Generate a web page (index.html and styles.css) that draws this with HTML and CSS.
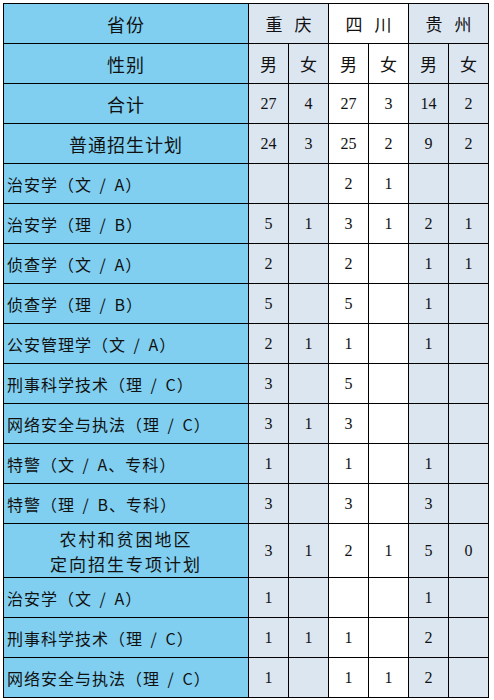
FILE: index.html
```html
<!DOCTYPE html>
<html lang="zh-CN">
<head>
<meta charset="utf-8">
<title>招生计划</title>
<link rel="stylesheet" href="styles.css">
</head>
<body>
<table class="plan">
  <colgroup>
    <col class="c-label">
    <col class="c-num"><col class="c-num"><col class="c-num"><col class="c-num"><col class="c-num"><col class="c-num">
  </colgroup>
  <tbody>
    <tr>
      <th class="lab head">省份</th>
      <th class="prov lt" colspan="2">重 庆</th>
      <th class="prov wh" colspan="2">四 川</th>
      <th class="prov lt" colspan="2">贵 州</th>
    </tr>
    <tr>
      <th class="lab head">性别</th>
      <th class="sex lt">男</th><th class="sex lt">女</th>
      <th class="sex wh">男</th><th class="sex wh">女</th>
      <th class="sex lt">男</th><th class="sex lt">女</th>
    </tr>
    <tr>
      <th class="lab head">合计</th>
      <td class="lt">27</td><td class="lt">4</td><td class="wh">27</td><td class="wh">3</td><td class="lt">14</td><td class="lt">2</td>
    </tr>
    <tr>
      <th class="lab head">普通招生计划</th>
      <td class="lt">24</td><td class="lt">3</td><td class="wh">25</td><td class="wh">2</td><td class="lt">9</td><td class="lt">2</td>
    </tr>
    <tr>
      <th class="lab">治安学（文 / A）</th>
      <td class="lt"></td><td class="lt"></td><td class="wh">2</td><td class="wh">1</td><td class="lt"></td><td class="lt"></td>
    </tr>
    <tr>
      <th class="lab">治安学（理 / B）</th>
      <td class="lt">5</td><td class="lt">1</td><td class="wh">3</td><td class="wh">1</td><td class="lt">2</td><td class="lt">1</td>
    </tr>
    <tr>
      <th class="lab">侦查学（文 / A）</th>
      <td class="lt">2</td><td class="lt"></td><td class="wh">2</td><td class="wh"></td><td class="lt">1</td><td class="lt">1</td>
    </tr>
    <tr>
      <th class="lab">侦查学（理 / B）</th>
      <td class="lt">5</td><td class="lt"></td><td class="wh">5</td><td class="wh"></td><td class="lt">1</td><td class="lt"></td>
    </tr>
    <tr>
      <th class="lab">公安管理学（文 / A）</th>
      <td class="lt">2</td><td class="lt">1</td><td class="wh">1</td><td class="wh"></td><td class="lt">1</td><td class="lt"></td>
    </tr>
    <tr>
      <th class="lab">刑事科学技术（理 / C）</th>
      <td class="lt">3</td><td class="lt"></td><td class="wh">5</td><td class="wh"></td><td class="lt"></td><td class="lt"></td>
    </tr>
    <tr>
      <th class="lab">网络安全与执法（理 / C）</th>
      <td class="lt">3</td><td class="lt">1</td><td class="wh">3</td><td class="wh"></td><td class="lt"></td><td class="lt"></td>
    </tr>
    <tr>
      <th class="lab">特警（文 / A、专科）</th>
      <td class="lt">1</td><td class="lt"></td><td class="wh">1</td><td class="wh"></td><td class="lt">1</td><td class="lt"></td>
    </tr>
    <tr>
      <th class="lab">特警（理 / B、专科）</th>
      <td class="lt">3</td><td class="lt"></td><td class="wh">3</td><td class="wh"></td><td class="lt">3</td><td class="lt"></td>
    </tr>
    <tr class="tall">
      <th class="lab head two">农村和贫困地区<br>定向招生专项计划</th>
      <td class="lt">3</td><td class="lt">1</td><td class="wh">2</td><td class="wh">1</td><td class="lt">5</td><td class="lt">0</td>
    </tr>
    <tr>
      <th class="lab">治安学（文 / A）</th>
      <td class="lt">1</td><td class="lt"></td><td class="wh"></td><td class="wh"></td><td class="lt">1</td><td class="lt"></td>
    </tr>
    <tr>
      <th class="lab">刑事科学技术（理 / C）</th>
      <td class="lt">1</td><td class="lt">1</td><td class="wh">1</td><td class="wh"></td><td class="lt">2</td><td class="lt"></td>
    </tr>
    <tr>
      <th class="lab">网络安全与执法（理 / C）</th>
      <td class="lt">1</td><td class="lt"></td><td class="wh">1</td><td class="wh">1</td><td class="lt">2</td><td class="lt"></td>
    </tr>
  </tbody>
</table>
</body>
</html>
```
FILE: styles.css
```css
html, body {
  margin: 0;
  padding: 0;
  background: #ffffff;
}

body {
  padding: 3px 0 0 3px;
}

.plan {
  table-layout: fixed;
  width: 486px;
  border-collapse: separate;
  border-spacing: 1px;
  background: #000000;
}

.c-label { width: 244px; }
.c-num { width: 39px; }

.plan tr { height: 39px; }
.plan tr.tall { height: 53px; }

.plan th,
.plan td {
  padding: 0;
  height: 39px;
  text-align: center;
  vertical-align: middle;
  color: #111111;
  font-weight: normal;
}

.plan tr.tall th,
.plan tr.tall td { height: 53px; }

.lab {
  background: #80cff0;
  font-family: "Noto Sans CJK SC", "Noto Sans", sans-serif;
  font-weight: 500;
  font-size: 16px;
  letter-spacing: 1px;
  word-spacing: 3px;
  text-align: left !important;
  padding-left: 3px !important;
  white-space: nowrap;
}

.lab.head {
  text-align: center !important;
  padding-left: 0 !important;
  font-size: 18px;
  letter-spacing: 1px;
  word-spacing: 0;
}

.lab.head.two {
  font-size: 17px;
  letter-spacing: 2px;
  line-height: 25px;
}

.lt { background: #dce6f1; }
.wh { background: #ffffff; }

.prov,
.sex {
  font-family: "Noto Sans CJK SC", "Noto Sans", sans-serif;
  font-size: 17px;
}

.prov { letter-spacing: 4px; text-indent: 4px; }

.plan td {
  font-family: "Liberation Serif", "Times New Roman", serif;
  font-size: 16px;
}
```
